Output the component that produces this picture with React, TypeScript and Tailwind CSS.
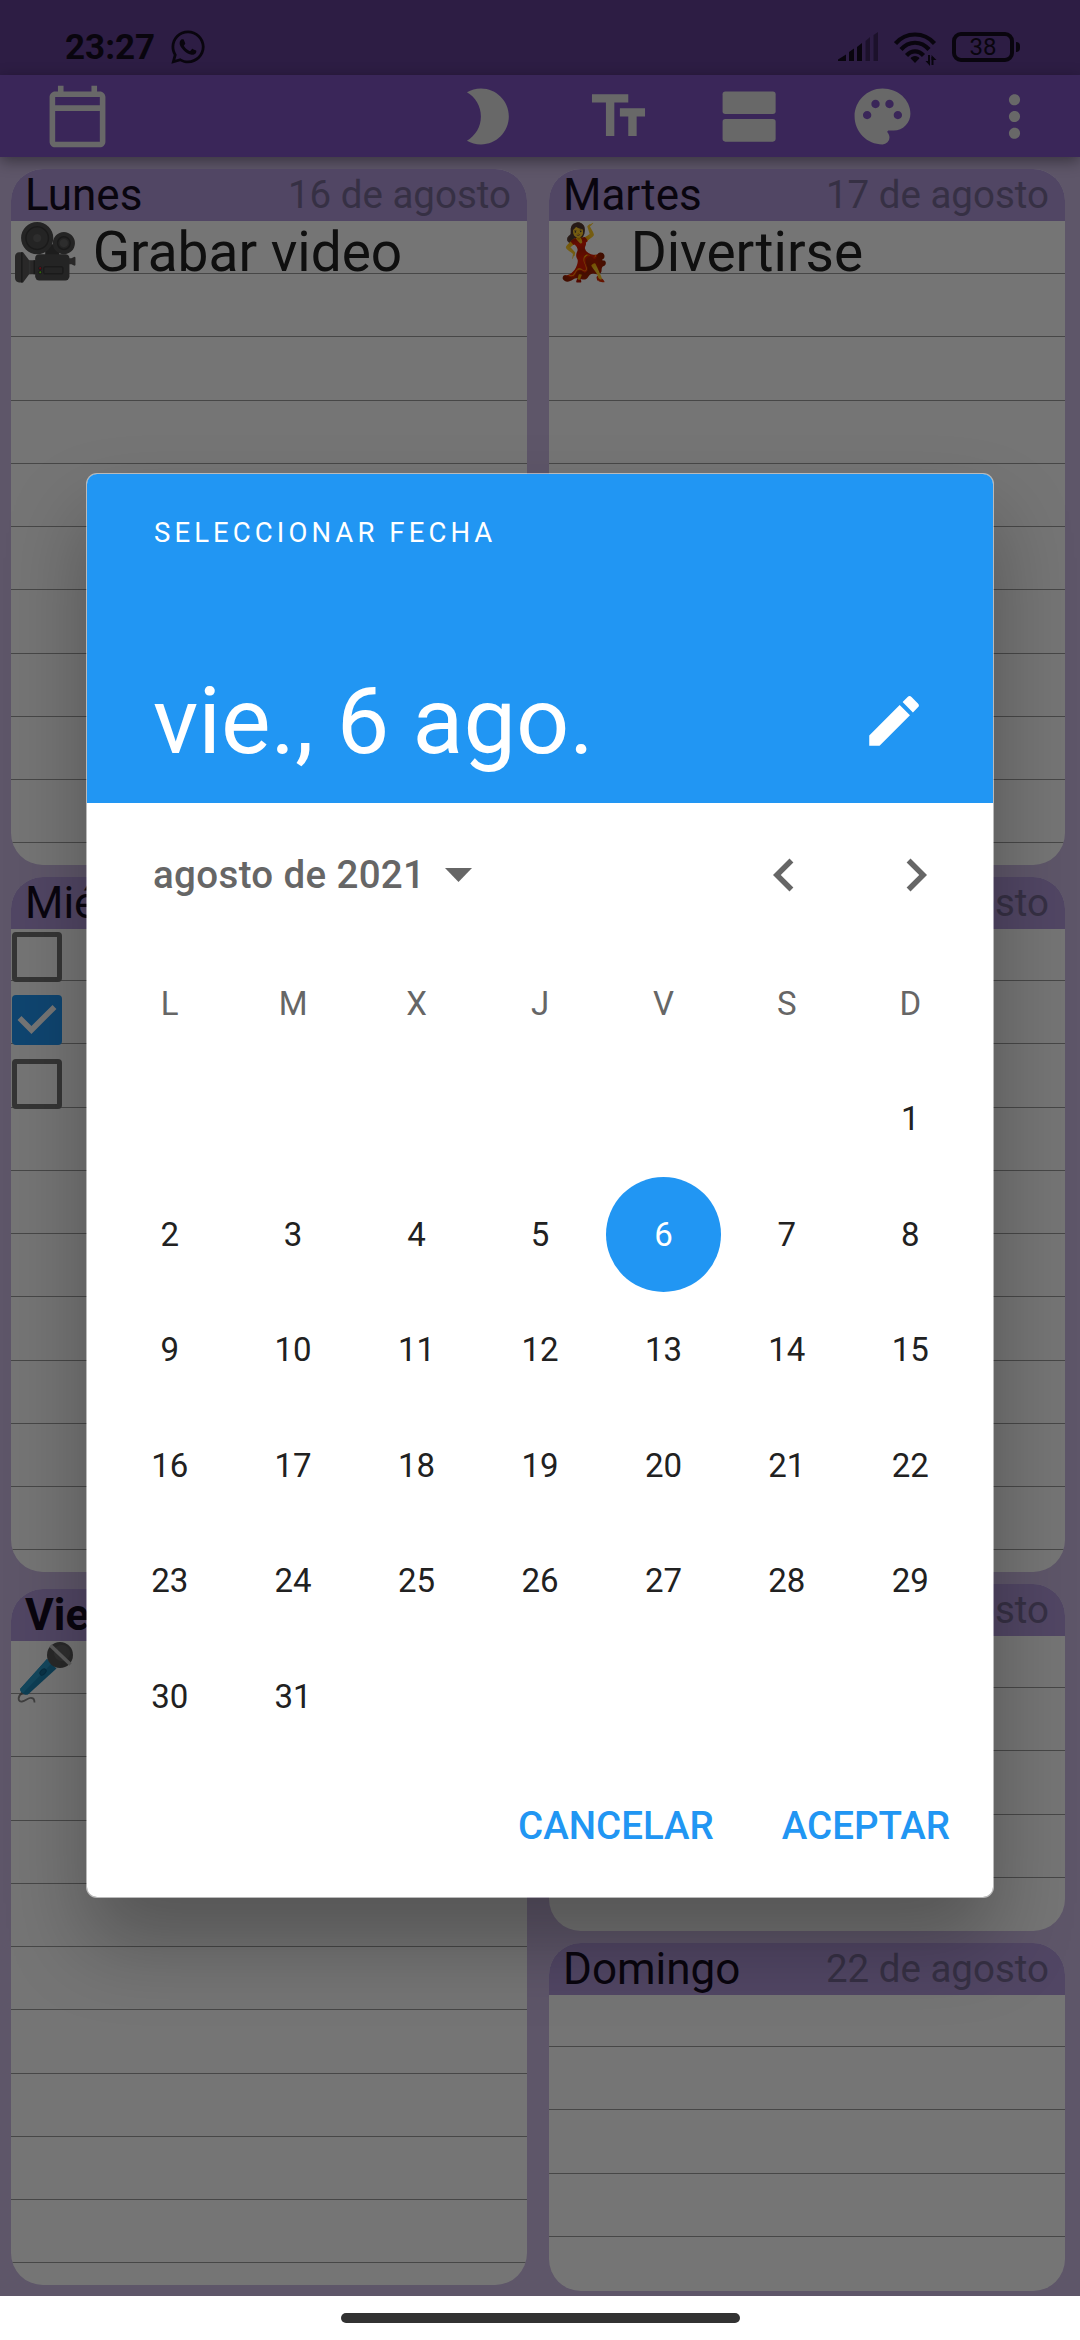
import type { ReactNode } from "react";
import { FaWhatsapp } from "react-icons/fa";
import {
  MdBrightness2,
  MdChevronLeft,
  MdChevronRight,
  MdEdit,
  MdMoreVert,
  MdPalette,
  MdTextFields,
} from "react-icons/md";

const WEEKDAYS = ["L", "M", "X", "J", "V", "S", "D"];
const FIRST_WEEKDAY = 6;
const DAYS_IN_MONTH = 31;
const SELECTED_DAY = 6;

function SignalIcon() {
  return (
    <svg width="41" height="30" viewBox="0 0 41 30" fill="#140c20">
      <path d="M0 29v-1.5l8-5V29zM11 20l5-3.5V29H11zM19 15l5-4V29H19z" />
      <path d="M27.5 9l4.5-4v24h-4.5zM35.5 3L40 0v29h-4.5z" opacity="0.45" />
    </svg>
  );
}

function WifiIcon() {
  return (
    <svg width="43" height="34" viewBox="0 0 43 34" fill="none" stroke="#140c20" strokeWidth="4.2">
      <path d="M1.5 11.5C12-.5 30-.5 40.5 11.5" />
      <path d="M7 17.5c8-9 20-9 28 0" />
      <path d="M12.5 23.5c5-5.5 12-5.5 17 0" />
      <path d="M21 24c-2.2 0-3.5 1-4.5 2.2L21 31l4.5-4.8C24.5 25 23.2 24 21 24z" fill="#140c20" stroke="none" />
      <path d="M35 23v8M38.5 33v-8" strokeWidth="2" />
      <path d="M31.5 29H36v5zM37.5 28v-5l5 5z" fill="#140c20" stroke="none" />
    </svg>
  );
}

function Battery() {
  return (
    <div className="flex items-center gap-[2px]">
      <div className="flex h-[30px] w-[62px] items-center justify-center rounded-[9px] border-4 border-[#140c20] text-2xl leading-none text-[#140c20]">
        38
      </div>
      <div className="h-[10px] w-[4px] rounded-r-full bg-[#140c20]" />
    </div>
  );
}

function StatusBar() {
  return (
    <div className="flex h-[75px] items-start bg-[#623f94] pt-[30px] pr-[60px] pl-[65px] text-[#140c20]">
      <span className="w-[104px] text-[35px] leading-[36px] font-bold">23:27</span>
      <FaWhatsapp className="-mt-[2px] size-[38px]" />
      <div className="ml-auto flex items-start pt-[2px]">
        <SignalIcon />
        <div className="ml-[15px]">
          <WifiIcon />
        </div>
        <div className="ml-[15px]">
          <Battery />
        </div>
      </div>
    </div>
  );
}

function ToolbarButton({ children }: { children: ReactNode }) {
  return <div className="flex w-[132px] justify-center">{children}</div>;
}

function Toolbar() {
  return (
    <div className="relative flex h-[82px] items-center bg-[#7f54c3] pl-[11px] text-[67px] text-[#e2e2e2] shadow-[0_4px_14px_rgba(0,0,0,0.4)]">
      <ToolbarButton>
        <svg className="size-[67px]" viewBox="0 0 24 24" fill="currentColor">
          <path d="M20 3h-1V1h-2v2H7V1H5v2H4c-1.1 0-2 .9-2 2v16c0 1.1.9 2 2 2h16c1.1 0 2-.9 2-2V5c0-1.1-.9-2-2-2zm0 18H4V10h16v11zm0-13H4V5h16v3z" />
        </svg>
      </ToolbarButton>
      <div className="ml-auto flex">
        <ToolbarButton><MdBrightness2 /></ToolbarButton>
        <ToolbarButton><MdTextFields /></ToolbarButton>
        <ToolbarButton>
          <svg className="size-[67px]" viewBox="0 0 24 24" fill="currentColor">
            <rect x="2" y="3" width="19" height="8.1" rx="1" />
            <rect x="2" y="12.9" width="19" height="8.1" rx="1" />
          </svg>
        </ToolbarButton>
        <ToolbarButton><MdPalette /></ToolbarButton>
        <ToolbarButton><MdMoreVert /></ToolbarButton>
      </div>
    </div>
  );
}

type DayCardProps = {
  name: string;
  date: string;
  height: string;
  today?: boolean;
  firstLine?: string;
  children?: ReactNode;
};

function DayCard({ name, date, height, today, firstLine = "h-[53px]", children }: DayCardProps) {
  return (
    <div className={`relative flex shrink-0 flex-col overflow-hidden rounded-[32px] bg-white ${height}`}>
      <div className="flex h-[52px] shrink-0 items-center justify-between bg-[#b098da] pr-[16px] pl-[14px]">
        <span className={`text-[44px] leading-[52px] text-[#140c20] ${today ? "font-bold" : ""}`}>{name}</span>
        <span className="text-[38.5px] leading-[52px] text-[#776a94]">{date}</span>
      </div>
      <div className={`shrink-0 border-b border-[#9c9c9c] ${firstLine}`} />
      {Array.from({ length: 10 }, (_, i) => (
        <div key={i} className="h-[63.25px] shrink-0 border-b border-[#9c9c9c]" />
      ))}
      <div className="absolute top-[52px] left-0 flex flex-col">{children}</div>
    </div>
  );
}

function Note({ children }: { children: ReactNode }) {
  return <p className="text-[55px] leading-[62px] whitespace-pre text-[#212121]">{children}</p>;
}

function Microphone() {
  return (
    <svg width="66" height="64" viewBox="0 0 66 64" fill="none">
      <path d="M11 52c-5 4-4 9 0 8.5s6-4 9.5-3.5c2.5.3 3 2 3 4.500" stroke="#8a8a8a" strokeWidth="1.8" />
      <path d="M8.5 54l3-5 4.5 4z" fill="#6e6e6e" />
      <path d="M36 18l9.5 9.5L17 53.5c-3 1.5-9-2.5-7.5-6z" fill="#1e88b8" />
      <path d="M36 18l4.5 4.5L12 52c-2-.8-3.3-2.7-2.5-4.500z" fill="#2a9bcb" />
      <ellipse cx="32" cy="31" rx="3.6" ry="2.4" transform="rotate(-45 32 31)" fill="#166f9c" stroke="#0f5f88" />
      <circle cx="49" cy="14" r="13" fill="#5a5a5a" />
      <circle cx="51" cy="12" r="8" fill="#686868" />
      <path d="M39.5 4.5l20 19" stroke="#c8c8c8" strokeWidth="3.6" />
    </svg>
  );
}

function Checkbox({ checked }: { checked?: boolean }) {
  return (
    <div className="flex h-[63.25px] items-start pt-[3px] pl-px">
      {checked ? (
        <div className="size-[50px] rounded-[4px] bg-[#2196f3]">
          <svg viewBox="3 3 18 18" fill="#fff">
            <path d="M10 17l-5-5 1.41-1.41L10 14.17l7.59-7.59L19 8z" />
          </svg>
        </div>
      ) : (
        <div className="size-[50px] rounded-[4px] border-[5.5px] border-[#737373]" />
      )}
    </div>
  );
}

function Planner() {
  return (
    <div className="flex h-[2139px] items-start justify-between overflow-hidden bg-[#ccbbe4] pt-[12px] pr-[15px] pl-[11px]">
      <div className="flex w-[516px] flex-col">
        <DayCard name="Lunes" date="16 de agosto" height="h-[696px]">
          <Note>🎥 Grabar video</Note>
        </DayCard>
        <div className="h-[12px]" />
        <DayCard name="Miércoles" date="18 de agosto" height="h-[695px]" firstLine="h-[52px]">
          <Checkbox />
          <Checkbox checked />
          <Checkbox />
        </DayCard>
        <div className="h-[17px]" />
        <DayCard name="Viernes" date="20 de agosto" height="h-[696px]" today>
          <Microphone />
        </DayCard>
      </div>
      <div className="flex w-[516px] flex-col">
        <DayCard name="Martes" date="17 de agosto" height="h-[696px]">
          <Note>💃 Divertirse</Note>
        </DayCard>
        <div className="h-[12px]" />
        <DayCard name="Jueves" date="19 de agosto" height="h-[695px]" firstLine="h-[52px]" />
        <div className="h-[12px]" />
        <DayCard name="Sábado" date="21 de agosto" height="h-[347px]" firstLine="h-[52px]" />
        <div className="h-[12px]" />
        <DayCard name="Domingo" date="22 de agosto" height="h-[348px]" firstLine="h-[52px]" />
      </div>
    </div>
  );
}

function DayGrid() {
  const days = Array.from({ length: DAYS_IN_MONTH }, (_, i) => i + 1);
  return (
    <div className="grid auto-rows-[115.5px] grid-cols-7 text-[33px] text-[#212121]">
      {WEEKDAYS.map((day) => (
        <div key={day} className="flex items-center justify-center text-[#666]">{day}</div>
      ))}
      {Array.from({ length: FIRST_WEEKDAY }, (_, i) => (
        <div key={`empty-${i}`} />
      ))}
      {days.map((day) => (
        <div key={day} className="flex items-center justify-center">
          {day === SELECTED_DAY ? (
            <span className="flex size-[115.5px] items-center justify-center rounded-full bg-[#2196f3] text-white">{day}</span>
          ) : (
            day
          )}
        </div>
      ))}
    </div>
  );
}

function DatePicker() {
  return (
    <div className="flex h-[1425px] w-[908px] flex-col overflow-hidden rounded-[11px] border border-[#ffffff80] bg-white bg-clip-padding">
      <div className="flex h-[329px] flex-col bg-[#2196f3] px-[66px] text-white">
        <div className="pt-[43px] pl-px text-[27.5px] leading-[32px] tracking-[4.1px]">SELECCIONAR FECHA</div>
        <div className="mt-[117px] flex items-center justify-between">
          <div className="text-[93.5px] leading-[110px]">vie., 6 ago.</div>
          <MdEdit className="size-[66px]" />
        </div>
      </div>
      <div className="flex h-[143px] items-center pr-[44px] pl-[66px] text-[#666]">
        <span className="text-[38.5px] font-medium tracking-[0.35px]">agosto de 2021</span>
        <svg className="ml-[20px]" width="27" height="14" viewBox="0 0 27 14" fill="currentColor">
          <path d="M0 0h27L13.5 14z" />
        </svg>
        <MdChevronLeft className="ml-auto size-[66px]" />
        <MdChevronRight className="ml-[66px] size-[66px]" />
      </div>
      <div className="-mt-[0.5px] px-[21px]">
        <DayGrid />
      </div>
      <div className="flex items-center justify-end gap-[68px] pt-[49px] pr-[43px] text-[38.5px] leading-[45px] font-medium text-[#2196f3]">
        <span>CANCELAR</span>
        <span>ACEPTAR</span>
      </div>
    </div>
  );
}

export default function App() {
  return (
    <div className="relative h-[2340px] w-[1080px] overflow-hidden bg-white font-['Roboto',sans-serif]">
      <StatusBar />
      <Toolbar />
      <Planner />
      <div className="flex h-[44px] items-start justify-center bg-white pt-[17px]">
        <div className="h-[10px] w-[399px] rounded-full bg-[#323232]" />
      </div>
      <div className="absolute inset-x-0 top-0 flex h-[2296px] justify-center overflow-hidden bg-black/54 pt-[473px]">
        <div className="h-[1425px] rounded-[11px] shadow-[0_45px_80px_rgba(0,0,0,0.28)]">
          <DatePicker />
        </div>
      </div>
    </div>
  );
}
